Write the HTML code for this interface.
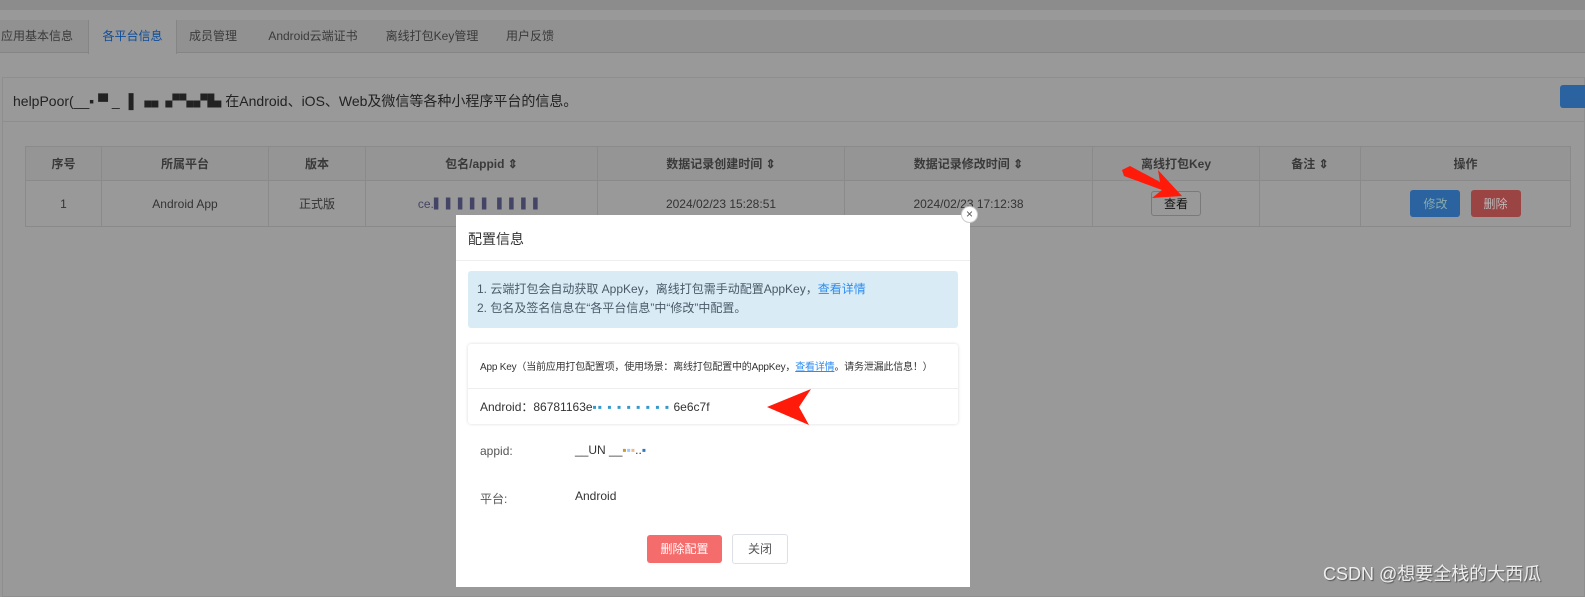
<!DOCTYPE html>
<html><head><meta charset="utf-8"><style>
*{box-sizing:border-box;margin:0;padding:0}
html,body{background:#999}
body{width:1585px;height:597px;overflow:hidden;font-family:"Liberation Sans","Noto Sans CJK SC",sans-serif;font-size:12px;color:#333;position:relative}
.abs{position:absolute}
.tabs{top:20px;left:0;width:1585px;height:33px;background:#919191;border-bottom:1px solid #858585}
.tab{position:absolute;top:0;height:33px;line-height:33px;font-size:12px;color:#3a3a3a;text-align:center}
.card{left:2px;top:77px;width:1583px;height:520px;border:1px solid #8e8e8e;background:#999}
table{position:absolute;left:25px;top:146px;border-collapse:collapse;font-size:12px;table-layout:fixed;width:1545px}
td,th{border:1px solid #8a8a8a;text-align:center;color:#333}
th{height:34px;background:#959595;font-weight:bold;color:#3a3a3a}
td{height:46px}
.modal{left:456px;top:215px;width:514px;height:372px;background:#fff;z-index:6}
.btn{position:absolute;border-radius:3px;text-align:center;font-size:12px}
</style></head><body>
<div class="abs" style="left:0;top:0;width:1585px;height:10px;background:#8c8c8c"></div>
<div class="abs tabs">
<div class="tab" style="left:-7px;width:88px">应用基本信息</div>
<div class="tab" style="left:88px;width:89px;background:#999;color:#0f4d99;border-left:1px solid #858585;border-right:1px solid #858585;height:34px">各平台信息</div>
<div class="tab" style="left:173px;width:80px">成员管理</div>
<div class="tab" style="left:253px;width:120px">Android云端证书</div>
<div class="tab" style="left:372px;width:120px">离线打包Key管理</div>
<div class="tab" style="left:490px;width:80px">用户反馈</div>
</div>
<div class="abs card">
<div class="abs" style="left:10px;top:13px;font-size:14px;color:#222">helpPoor(__▪ ▀ _ ▐ ▗▖▞▚▞▙ 在Android、iOS、Web及微信等各种小程序平台的信息。</div>
<div class="abs" style="left:0;top:43px;width:1583px;border-top:1px solid #8e8e8e"></div>
<div class="abs" style="left:1557px;top:7px;width:30px;height:23px;background:#2a63a0;border-radius:3px"></div>
</div>
<table>
<colgroup><col style="width:76px"><col style="width:167px"><col style="width:97px"><col style="width:232px"><col style="width:247px"><col style="width:248px"><col style="width:167px"><col style="width:101px"><col style="width:210px"></colgroup>
<tr><th>序号</th><th>所属平台</th><th>版本</th><th>包名/appid ⇕</th><th>数据记录创建时间 ⇕</th><th>数据记录修改时间 ⇕</th><th>离线打包Key</th><th>备注 ⇕</th><th>操作</th></tr>
<tr><td>1</td><td>Android App</td><td>正式版</td><td><span style="color:#446">ce.▍▍▍▍▍ ▍▍▍▍</span></td><td>2024/02/23 15:28:51</td><td>2024/02/23 17:12:38</td><td><span style="display:inline-block;border:1px solid #7a7a7a;border-radius:3px;padding:3px 12px;background:#999;color:#111">查看</span></td><td></td><td><span style="display:inline-block;background:#2a63a0;color:#8aa;padding:5px 13px;border-radius:3px">修改</span> &nbsp; <span style="display:inline-block;background:#9a4444;color:#bbb;padding:5px 13px;border-radius:3px">删除</span></td></tr>
</table>
<svg class="abs" style="left:1110px;top:160px;z-index:7" width="90" height="45"><polygon points="12,10 20,6 50,22 48,10 72,36 42,38 52,30 14,16" fill="#ff1a0a"/></svg>
<div class="abs" style="left:1323px;top:560px;font-size:18px;color:#eee;text-shadow:1px 1px 1px #555">CSDN @想要全栈的大西瓜</div>
<div class="abs modal">
<div class="abs" style="left:12px;top:14px;font-size:14px;color:#333">配置信息</div>
<div class="abs" style="left:0;top:45px;width:514px;border-top:1px solid #eee"></div>
<div class="abs" style="left:12px;top:56px;width:490px;height:57px;background:#d9ecf6;border-radius:3px;padding:9px 9px;font-size:12px;line-height:19px;color:#4a5a66">1. 云端打包会自动获取 AppKey，离线打包需手动配置AppKey，<span style="color:#2d8cf0">查看详情</span><br>2. 包名及签名信息在“各平台信息”中“修改”中配置。</div>
<div class="abs" style="left:12px;top:129px;width:490px;height:80px;border-radius:3px;box-shadow:0 0 3px rgba(0,0,0,0.15)">
<div class="abs" style="left:12px;top:14px;font-size:10px;color:#333;white-space:nowrap;letter-spacing:-0.2px">App Key（当前应用打包配置项，使用场景：离线打包配置中的AppKey，<span style="color:#2d8cf0;text-decoration:underline">查看详情</span>。请务泄漏此信息！）</div>
<div class="abs" style="left:0;top:44px;width:490px;border-top:1px solid #eee"></div>
<div class="abs" style="left:12px;top:54px;font-size:12px;color:#333">Android：86781163e<span style="color:#39c;letter-spacing:1px">▪▪ ▪ ▪ ▪ ▪ ▪ ▪ ▪</span> 6e6c7f</div>
</div>
<svg class="abs" style="left:305px;top:172px" width="60" height="45"><polygon points="50,2 38,20 48,38 6,20" fill="#ff1a0a"/></svg>
<div class="abs" style="left:24px;top:229px;color:#555">appid:</div>
<div class="abs" style="left:119px;top:228px;color:#333">__UN __<span style="color:#c93">▪</span><span style="color:#9cf">▪</span><span style="color:#eb8">▪</span>..<span style="color:#37b">▪</span></div>
<div class="abs" style="left:24px;top:275px;color:#555">平台:</div>
<div class="abs" style="left:119px;top:274px;color:#333">Android</div>
<div class="btn" style="left:191px;top:320px;width:75px;height:28px;line-height:28px;background:#f56c6c;color:#fff">删除配置</div>
<div class="btn" style="left:276px;top:319px;width:56px;height:30px;line-height:28px;border:1px solid #dcdfe6;color:#555">关闭</div>
</div>
<div class="abs" style="left:961px;top:206px;width:17px;height:17px;border-radius:50%;background:#fff;border:1px solid #ccc;text-align:center;line-height:14px;font-size:12px;color:#555;z-index:8">×</div>
</body></html>
